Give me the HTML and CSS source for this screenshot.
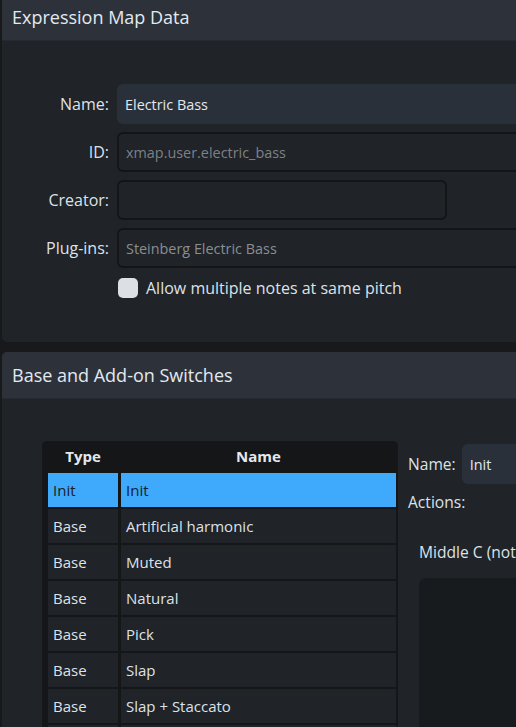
FILE: index.html
```html
<!DOCTYPE html>
<html lang="en">
<head>
<meta charset="utf-8">
<title>Expression Map Data</title>
<link rel="stylesheet" href="styles.css">
</head>
<body>
<div class="page">
  <section class="panel panel-first">
    <div class="panel-head">Expression Map Data</div>
    <div class="panel-body form">
      <div class="lbl">Name:</div>
      <div class="field filled wide">Electric Bass</div>
      <div class="lbl">ID:</div>
      <div class="field outline wide placeholder">xmap.user.electric_bass</div>
      <div class="lbl">Creator:</div>
      <div class="field outline short"></div>
      <div class="lbl">Plug-ins:</div>
      <div class="field outline wide muted">Steinberg Electric Bass</div>
      <div></div>
      <label class="check"><span class="box"></span><span>Allow multiple notes at same pitch</span></label>
    </div>
  </section>
  <section class="panel">
    <div class="panel-head">Base and Add-on Switches</div>
    <div class="panel-body switches">
      <div class="table">
        <div class="th">Type</div>
        <div class="th">Name</div>
        <div class="td sel">Init</div><div class="td sel">Init</div>
        <div class="td">Base</div><div class="td">Artificial harmonic</div>
        <div class="td">Base</div><div class="td">Muted</div>
        <div class="td">Base</div><div class="td">Natural</div>
        <div class="td">Base</div><div class="td">Pick</div>
        <div class="td">Base</div><div class="td">Slap</div>
        <div class="td">Base</div><div class="td">Slap + Staccato</div>
        <div class="td">Base</div><div class="td">Staccato</div>
      </div>
      <div class="detail">
        <div class="name-row">
          <div class="lbl2">Name:</div>
          <div class="field filled dwide">Init</div>
        </div>
        <div class="lbl2 actions">Actions:</div>
        <div class="middle">Middle C (note 60):</div>
        <div class="action-box"></div>
      </div>
    </div>
  </section>
</div>
</body>
</html>
```
FILE: styles.css
```css
html, body {
  margin: 0;
  padding: 0;
  background: #17191b;
  overflow: hidden;
}
body {
  font-family: "Open Sans", "Noto Sans", sans-serif;
  font-size: 15px;
  color: #dce2e9;
}
.page {
  width: 640px;
  padding-left: 2px;
  display: flex;
  flex-direction: column;
  gap: 10px;
}
.panel {
  background: #202327;
  border-radius: 5px;
  overflow: hidden;
}
.panel-first {
  margin-top: -6px;
}
.panel-head {
  height: 47px;
  display: flex;
  align-items: center;
  padding-left: 10px;
  background: #2d323a;
  border-bottom: 1px solid #262a30;
  box-sizing: border-box;
  font-size: 18px;
  color: #e2e9f1;
}
.form {
  display: grid;
  grid-template-columns: 107px auto;
  column-gap: 8px;
  row-gap: 8px;
  align-items: center;
  padding: 43px 0 44px 0;
}
.lbl {
  text-align: right;
  font-size: 16px;
}
.field {
  height: 40px;
  box-sizing: border-box;
  border-radius: 6px;
  display: flex;
  align-items: center;
  padding-left: 8px;
  font-size: 14.4px;
}
.filled {
  background: #2a3039;
  color: #e2e8ef;
}
.outline {
  border: 2px solid #131517;
  background: #202327;
  padding-left: 7px;
}
.wide { width: 470px; }
.short { width: 330px; }
.placeholder { color: #7c8187; }
.muted { color: #8a8e93; }
.check {
  display: flex;
  align-items: center;
  gap: 8px;
  margin-top: 2px;
  height: 20px;
  padding-left: 1px;
  font-size: 16px;
}
.box {
  width: 20px;
  height: 20px;
  border-radius: 5px;
  background: #dcdfe4;
}
.switches {
  display: flex;
  align-items: flex-start;
  padding: 42px 0 0 40px;
  height: 400px;
}
.table {
  width: 356px;
  box-sizing: border-box;
  background: #141618;
  border-radius: 5px 5px 0 0;
  padding: 0 2px 0 6px;
  display: grid;
  grid-template-columns: 70px 275px;
  grid-template-rows: 30px;
  grid-auto-rows: 34px;
  column-gap: 3px;
  row-gap: 2px;
}
.th {
  display: flex;
  align-items: center;
  justify-content: center;
  font-weight: 700;
  color: #e4e8ee;
}
.td {
  background: #202327;
  display: flex;
  align-items: center;
  padding-left: 5px;
}
.td.sel {
  background: #3fa9fb;
  color: #17202b;
}
.detail {
  margin-left: 10px;
  margin-top: 3px;
  display: flex;
  flex-direction: column;
  font-size: 15.6px;
}
.name-row {
  display: flex;
  align-items: center;
  gap: 6px;
}
.dwide { width: 200px; }
.actions {
  margin-top: 8px;
  height: 20px;
  line-height: 20px;
}
.middle {
  margin-top: 30px;
  margin-left: 11px;
  height: 20px;
  line-height: 20px;
  white-space: nowrap;
}
.action-box {
  margin-left: 11px;
  margin-top: 16px;
  width: 300px;
  height: 200px;
  background: #181b1e;
  border-radius: 7px 7px 0 0;
}
```
